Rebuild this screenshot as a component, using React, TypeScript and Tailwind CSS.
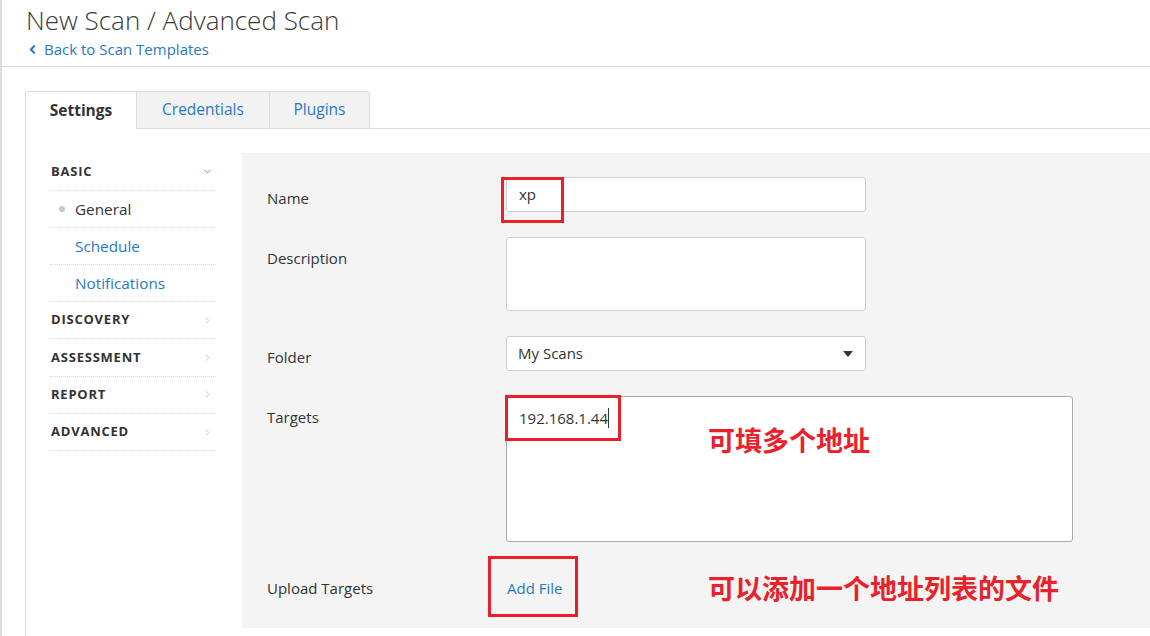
import { ChevronLeft, ChevronRight, ChevronDown } from 'lucide-react';

const SIDE_SECTIONS = ['DISCOVERY', 'ASSESSMENT', 'REPORT', 'ADVANCED'];

function Sidebar() {
  return (
    <div className="w-[166px] shrink-0 text-[#333]">
      <div className="h-[38px] flex items-center justify-between border-b border-dotted border-[#d6d6d6] pl-[1px]">
        <span className="text-[13px] font-bold tracking-[0.06em]">BASIC</span>
        <ChevronDown className="w-[11px] h-[11px] text-[#3b8ed6] mr-[3px]" strokeWidth={2} />
      </div>
      <div className="h-[37px] flex items-center border-b border-dotted border-[#d6d6d6]">
        <span className="w-[6px] h-[6px] rounded-full bg-[#c8c8c8] ml-[9px] mr-[10px]" />
        <span className="text-[15.3px]">General</span>
      </div>
      <div className="h-[37px] flex items-center border-b border-dotted border-[#d6d6d6] pl-[25px]">
        <span className="text-[15.3px] text-[#2a79c3]">Schedule</span>
      </div>
      <div className="h-[37px] flex items-center border-b border-dotted border-[#d6d6d6] pl-[25px]">
        <span className="text-[15.3px] text-[#2a79c3]">Notifications</span>
      </div>
      {SIDE_SECTIONS.map((s) => (
        <div
          key={s}
          className="h-[37.3px] flex items-center justify-between border-b border-dotted border-[#d6d6d6] pl-[1px]"
        >
          <span className="text-[13px] font-bold tracking-[0.06em]">{s}</span>
          <ChevronRight className="w-[11px] h-[11px] text-[#bdbdbd] mr-[3px]" strokeWidth={2} />
        </div>
      ))}
    </div>
  );
}

function Row({ label, children }: { label: string; children: React.ReactNode }) {
  return (
    <div className="flex">
      <div className="w-[239px] shrink-0 pt-[11px] text-[15px] leading-[20px] text-[#333]">{label}</div>
      {children}
    </div>
  );
}

function FormPanel() {
  return (
    <div className="flex-1 bg-[#f4f4f4] h-[475px] pl-[25px] pt-[24px] flex flex-col gap-[25px] relative">
      <Row label="Name">
        <div className="relative">
          <div className="w-[360px] h-[35px] bg-white border border-[#cfcfcf] rounded-[3px] pl-[12px] flex items-center text-[15px] text-[#333]">
            xp
          </div>
          <div className="absolute left-[-5px] top-0 w-[63px] h-[46px] border-[3px] border-[#e8202a]" />
        </div>
      </Row>
      <Row label="Description">
        <div className="w-[360px] h-[74px] bg-white border border-[#cfcfcf] rounded-[3px]" />
      </Row>
      <Row label="Folder">
        <div className="w-[360px] h-[35px] bg-white border border-[#cfcfcf] rounded-[3px] pl-[11px] pr-[12px] flex items-center justify-between text-[15px] text-[#333]">
          <span>My Scans</span>
          <svg width="10" height="6" viewBox="0 0 10 6" className="text-[#333]">
            <path d="M0 0h10L5 6z" fill="currentColor" />
          </svg>
        </div>
      </Row>
      <Row label="Targets">
        <div className="relative">
          <div className="w-[567px] h-[146px] bg-white border border-[#a9a9a9] rounded-[3px] pl-[12px] pt-[11px] text-[15px] leading-[20px] text-[#333] flex items-start">
            <span>192.168.1.44</span>
            <span className="w-px h-[20px] bg-[#333]" />
          </div>
          <div className="absolute left-[-1px] top-[-1px] w-[116px] h-[46px] border-[3px] border-[#e8202a]" />
          <div className="absolute left-[202px] top-[27px] text-[27px] leading-[34px] font-bold text-[#e8212b] font-['Noto_Sans_CJK_SC',sans-serif] whitespace-nowrap">
            可填多个地址
          </div>
        </div>
      </Row>
      <Row label="Upload Targets">
        <div className="relative pt-[11px] pl-[1px] text-[15px] leading-[20px] text-[#2a79c3]">
          Add File
          <div className="absolute left-[-18px] top-[-11px] w-[90px] h-[61px] border-[3px] border-[#e8202a]" />
          <div className="absolute left-[202px] top-[4px] text-[27px] leading-[34px] font-bold text-[#e8212b] font-['Noto_Sans_CJK_SC',sans-serif] whitespace-nowrap">
            可以添加一个地址列表的文件
          </div>
        </div>
      </Row>
    </div>
  );
}

export default function App() {
  return (
    <div className="w-[1150px] h-[636px] overflow-hidden bg-white border-l-2 border-[#dcdcdc] font-['Open_Sans',sans-serif] text-[#333]">
      <div className="h-[67px] border-b border-[#dcdcdc] pl-[24px] pt-[3px]">
        <h1 className="text-[26px] leading-[34px] font-light text-[#3a3a3a]">New Scan / Advanced Scan</h1>
        <div className="flex items-center mt-[2px] text-[15px] leading-[20px] text-[#2a79c3]">
          <ChevronLeft className="w-[13px] h-[13px] mr-[5px]" strokeWidth={4} />
          <span>Back to Scan Templates</span>
        </div>
      </div>
      <div className="pl-[23px] pt-[24px]">
        <div className="flex h-[38px]">
          <div className="w-[112px] bg-white border border-b-0 border-[#dcdcdc] rounded-tl-[3px] flex items-center justify-center text-[15.5px] font-bold text-[#333]">
            Settings
          </div>
          <div className="w-[132px] bg-[#f2f2f2] border-t border-b border-[#dcdcdc] flex items-center justify-center text-[15.5px] text-[#2a79c3]">
            Credentials
          </div>
          <div className="w-[101px] bg-[#f2f2f2] border border-[#dcdcdc] rounded-tr-[3px] flex items-center justify-center text-[15.5px] text-[#2a79c3]">
            Plugins
          </div>
          <div className="flex-1 border-b border-[#dcdcdc]" />
        </div>
        <div className="border-l border-[#dcdcdc] h-[520px] pl-[24px] pt-[24px] flex gap-[26px]">
          <Sidebar />
          <FormPanel />
        </div>
      </div>
    </div>
  );
}
